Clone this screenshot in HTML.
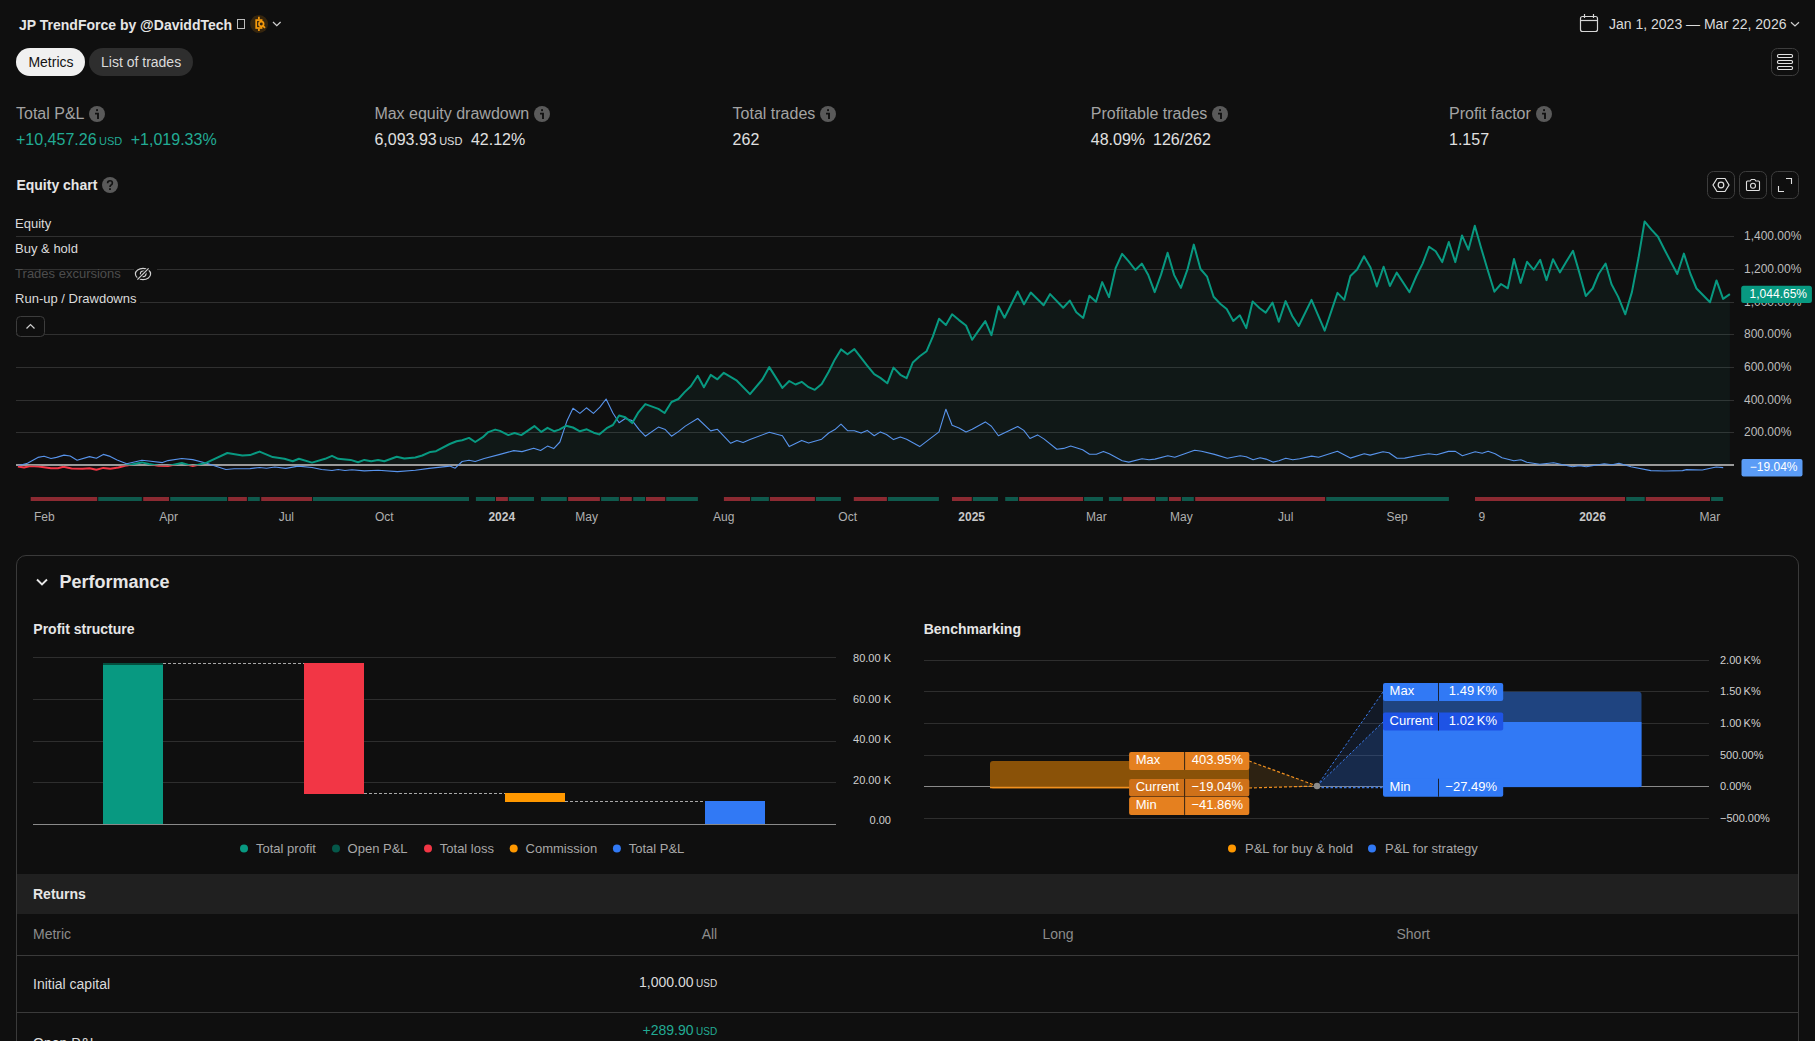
<!DOCTYPE html><html><head><meta charset="utf-8"><style>
html,body{margin:0;padding:0;background:#0f0f0f;width:1815px;height:1041px;overflow:hidden;}
body{position:relative;font-family:"Liberation Sans", sans-serif;}
.t{position:absolute;line-height:1;white-space:nowrap;}
.abs{position:absolute;}
svg{position:absolute;left:0;top:0;}
</style></head><body>
<div class="t" style="left:19px;top:17.55px;font-size:14px;color:#e6e6e6;font-weight:700;">JP TrendForce by @DaviddTech</div>
<div class="abs" style="left:237px;top:19px;width:8px;height:10px;border:1px solid #bbb;box-sizing:border-box;"></div>
<svg width="1815" height="1041" style="pointer-events:none">
<circle cx="259.1" cy="24" r="9" fill="#35250e"/>
<g stroke="#f59a0c" stroke-width="1.7" fill="none">
<rect x="256.2" y="20.1" width="5.4" height="7.9" />
<line x1="258.9" y1="16.8" x2="258.9" y2="19.5"/><line x1="258.9" y1="28.5" x2="258.9" y2="30.9"/>
<circle cx="261.3" cy="24" r="2.3" fill="#35250e"/><line x1="263" y1="25.8" x2="265" y2="27.8"/>
</g>
<path d="M273 22 L276.8 25.6 L280.6 22" stroke="#cfcfcf" stroke-width="1.3" fill="none"/>
</svg>
<div class="abs" style="left:16px;top:48px;width:69px;height:28px;border-radius:14px;background:#f0f0f0;"></div>
<div class="t" style="left:28.4px;top:54.65px;font-size:14px;color:#131313;font-weight:400;">Metrics</div>
<div class="abs" style="left:89px;top:48px;width:104px;height:28px;border-radius:14px;background:#2e2e2e;"></div>
<div class="t" style="left:101px;top:54.65px;font-size:14px;color:#dbdbdb;font-weight:400;">List of trades</div>
<div class="t" style="left:1609px;top:17.45px;font-size:14px;color:#dbdbdb;font-weight:400;">Jan 1, 2023 — Mar 22, 2026</div>
<svg width="1815" height="1041">
<g stroke="#d6d6d6" stroke-width="1.2" fill="none">
<rect x="1580.5" y="16.5" width="17" height="15" rx="2"/>
<line x1="1580.5" y1="20.5" x2="1597.5" y2="20.5"/>
<line x1="1584.5" y1="14" x2="1584.5" y2="18"/><line x1="1593.5" y1="14" x2="1593.5" y2="18"/>
</g>
<path d="M1791 22.2 L1795 26 L1799 22.2" stroke="#cfcfcf" stroke-width="1.2" fill="none"/>
<rect x="1771.5" y="48.5" width="27" height="27" rx="6" stroke="#3d3d3d" fill="none"/>
<g stroke="#e0e0e0" stroke-width="1.2" fill="none">
<rect x="1777.5" y="54.5" width="15" height="3" rx="1.2"/>
<rect x="1777.5" y="60.5" width="15" height="3" rx="1.2"/>
<rect x="1777.5" y="66.5" width="15" height="3" rx="1.2"/>
</g>
</svg>
<div id="metrics">
<div class="t" style="left:16px;top:105.66px;font-size:16px;color:#a3a3a3;font-weight:400;">Total P&amp;L</div>
<div class="t" style="left:374.4px;top:105.66px;font-size:16px;color:#a3a3a3;font-weight:400;">Max equity drawdown</div>
<div class="t" style="left:732.6px;top:105.66px;font-size:16px;color:#a3a3a3;font-weight:400;">Total trades</div>
<div class="t" style="left:1090.8px;top:105.66px;font-size:16px;color:#a3a3a3;font-weight:400;">Profitable trades</div>
<div class="t" style="left:1449px;top:105.66px;font-size:16px;color:#a3a3a3;font-weight:400;">Profit factor</div>
</div>
<div class="t" style="left:16px;top:132.46px;font-size:16px;color:#22ab94">+10,457.26<span style="font-size:11px;margin-left:2.5px">USD</span><span style="margin-left:8.5px">+1,019.33%</span></div>
<div class="t" style="left:374.4px;top:132.46px;font-size:16px;color:#e0e0e0">6,093.93<span style="font-size:11px;margin-left:2.5px">USD</span><span style="margin-left:8.5px">42.12%</span></div>
<div class="t" style="left:732.6px;top:132.46px;font-size:16px;color:#e0e0e0;font-weight:400;">262</div>
<div class="t" style="left:1090.8px;top:132.46px;font-size:16px;color:#e0e0e0">48.09%<span style="margin-left:8px">126/262</span></div>
<div class="t" style="left:1449px;top:132.46px;font-size:16px;color:#e0e0e0;font-weight:400;">1.157</div>
<div class="t" style="left:16.4px;top:177.75px;font-size:14px;color:#e6e6e6;font-weight:700;">Equity chart</div>
<svg width="1815" height="1041">
<defs><clipPath id="above"><rect x="0" y="0" width="1815" height="465.4"/></clipPath><clipPath id="below"><rect x="0" y="465.4" width="1815" height="200"/></clipPath></defs>
<line x1="16" y1="432.5" x2="1734" y2="432.5" stroke="#303030" stroke-width="1"/>
<line x1="16" y1="400.5" x2="1734" y2="400.5" stroke="#303030" stroke-width="1"/>
<line x1="16" y1="367.5" x2="1734" y2="367.5" stroke="#303030" stroke-width="1"/>
<line x1="16" y1="334.5" x2="1734" y2="334.5" stroke="#303030" stroke-width="1"/>
<line x1="16" y1="302.5" x2="1734" y2="302.5" stroke="#303030" stroke-width="1"/>
<line x1="16" y1="269.5" x2="1734" y2="269.5" stroke="#303030" stroke-width="1"/>
<line x1="16" y1="236.5" x2="1734" y2="236.5" stroke="#303030" stroke-width="1"/>
<polygon points="17.9,465.0 17.9,466.5 24.1,467.5 30.3,466.1 38.6,466.5 51.0,468.2 57.9,468.2 63.4,466.8 71.6,468.4 82.6,468.8 89.5,468.2 96.4,469.8 103.3,467.9 110.2,468.8 118.5,467.5 126.7,465.4 141.9,462.4 148.8,464.0 158.4,465.7 168.0,466.1 181.8,463.0 192.8,466.1 206.6,462.6 227.3,453.0 242.4,455.5 250.0,455.1 259.6,451.6 272.7,457.1 284.4,458.8 292.7,461.3 298.9,458.8 312.0,462.6 325.1,458.8 332.0,455.8 338.2,458.8 350.6,459.9 358.1,462.2 364.3,459.9 371.2,461.3 378.1,459.9 384.3,461.3 396.7,456.7 404.3,458.5 415.3,457.5 422.2,455.5 430.4,451.9 436.0,451.2 449.7,444.0 456.6,441.3 462.1,440.2 469.0,437.9 475.2,442.0 482.8,437.2 488.3,432.1 495.2,429.6 500.0,430.9 508.3,435.1 514.5,433.0 521.3,435.1 534.4,426.1 541.3,431.9 547.5,427.8 554.4,431.3 559.2,429.6 566.1,425.8 573.0,427.5 579.9,431.3 586.8,429.3 593.7,432.7 599.2,434.4 606.7,428.2 612.9,425.0 619.1,415.5 625.3,417.2 632.2,423.1 638.4,412.3 645.3,404.1 658.4,408.9 664.6,413.0 671.5,402.0 678.4,399.0 684.6,392.1 690.8,386.2 697.7,375.8 703.9,387.3 710.7,374.9 717.4,379.3 723.8,372.8 736.9,380.7 750.0,394.1 762.3,379.5 769.3,367.1 782.4,387.9 789.3,381.0 795.5,384.5 801.7,381.8 808.6,387.2 814.8,389.8 821.7,384.1 828.7,371.7 834.9,359.4 841.0,349.4 847.5,354.3 854.4,349.1 867.2,365.6 874.2,374.1 880.4,377.9 887.3,383.3 893.5,367.6 900.4,374.8 906.6,378.2 912.8,362.5 919.7,356.3 926.6,351.2 932.8,336.6 939.0,318.8 945.9,325.0 952.1,314.3 959.0,320.1 966.0,325.5 972.2,339.8 978.3,330.9 985.3,321.1 991.4,335.2 998.4,306.2 1004.5,317.7 1017.7,291.5 1024.0,304.3 1030.8,292.5 1043.6,305.2 1050.1,294.1 1063.2,307.8 1069.8,300.6 1076.3,312.2 1083.2,317.9 1089.4,295.7 1096.0,301.8 1102.2,282.1 1109.0,297.2 1115.6,268.2 1122.1,253.8 1128.7,261.3 1135.4,270.0 1141.8,263.6 1148.0,274.4 1154.7,292.1 1161.1,274.4 1167.6,252.8 1174.2,275.1 1180.9,287.9 1187.4,269.7 1193.8,244.6 1200.5,269.0 1207.1,276.7 1213.6,296.7 1220.5,304.0 1226.7,309.1 1233.3,321.0 1239.8,315.3 1246.3,328.1 1252.6,301.4 1259.4,308.0 1265.7,312.6 1272.5,302.6 1278.8,321.7 1285.6,301.1 1292.3,316.0 1298.7,326.0 1311.5,299.9 1324.7,330.7 1337.5,292.9 1344.2,299.9 1350.4,276.0 1357.1,269.5 1364.0,256.2 1370.5,267.5 1376.8,286.5 1383.6,266.7 1389.9,286.0 1396.7,272.6 1409.5,292.2 1416.4,276.0 1422.6,263.6 1429.1,246.7 1435.7,251.3 1442.2,262.1 1448.8,242.0 1455.3,262.1 1462.0,235.4 1468.4,249.7 1474.8,225.8 1481.2,248.2 1487.4,269.0 1494.4,291.7 1501.0,284.0 1507.8,288.3 1514.0,259.0 1520.6,282.9 1527.1,261.8 1533.7,269.8 1540.2,259.8 1546.5,280.1 1553.0,259.3 1559.9,272.4 1566.1,262.1 1573.0,250.8 1579.2,272.1 1585.8,296.0 1592.6,288.5 1598.6,274.0 1605.6,263.5 1611.5,284.3 1618.2,296.9 1625.3,314.3 1631.9,292.1 1638.5,257.8 1644.6,221.4 1651.4,229.6 1658.0,236.8 1664.7,250.0 1677.3,274.0 1683.9,253.6 1690.5,274.0 1696.5,288.5 1710.0,302.3 1716.5,280.4 1723.1,298.9 1729.9,294.1 1729.9,465.0" fill="rgba(34,171,148,0.06)" clip-path="url(#above)"/>
<line x1="16" y1="465.0" x2="1734" y2="465.0" stroke="#9a9a9a" stroke-width="2"/>
<polyline points="17.9,465.7 27.5,463.3 37.9,457.4 44.1,456.2 51.0,458.5 56.5,457.4 64.0,455.1 70.2,456.0 77.1,460.2 89.5,456.6 96.4,458.2 103.3,454.4 110.2,456.4 117.1,459.9 126.7,463.7 141.9,460.3 148.8,461.0 162.5,462.6 168.0,460.6 181.8,458.5 192.8,459.6 206.6,463.3 225.9,469.5 234.2,468.8 250.0,468.6 259.6,467.5 266.5,468.2 274.8,467.0 285.8,468.4 298.2,466.1 312.0,467.5 321.6,469.5 332.0,470.5 338.2,469.5 345.0,470.5 351.9,469.8 364.3,470.9 378.1,470.2 397.4,471.6 415.3,470.2 429.1,468.4 449.7,466.1 455.2,468.2 462.1,461.5 469.0,460.3 475.2,461.5 484.2,458.5 500.0,454.4 513.8,450.6 522.0,451.6 533.7,448.2 540.6,450.5 547.5,446.1 553.7,448.6 559.9,442.0 566.8,421.3 573.0,408.2 579.9,413.4 586.4,407.8 593.4,413.4 599.9,407.2 606.1,399.0 612.9,413.0 619.1,422.7 625.3,418.5 632.2,420.6 639.1,429.6 645.3,436.2 658.4,427.1 665.3,429.6 671.5,436.2 678.4,431.6 685.3,426.1 697.7,418.5 710.7,430.9 717.4,429.3 730.7,443.3 736.9,440.6 743.1,442.6 750.0,439.6 769.3,432.2 782.4,435.8 789.3,446.6 801.7,440.4 808.6,443.0 821.7,439.2 828.7,433.0 834.9,429.6 841.0,424.2 847.5,430.7 854.4,430.7 861.1,433.1 867.2,430.4 874.2,435.8 880.4,431.9 886.5,434.5 893.5,439.6 900.4,437.0 906.6,439.2 919.7,446.6 939.0,431.9 945.9,409.2 952.1,425.3 959.0,428.0 966.0,431.9 972.2,429.3 985.3,421.9 991.4,426.2 998.4,435.8 1017.7,426.5 1023.8,430.4 1030.0,438.5 1037.5,434.9 1043.9,438.9 1056.8,449.2 1063.7,448.4 1070.7,446.0 1082.6,449.8 1089.5,454.2 1096.4,454.2 1103.4,451.4 1109.3,453.8 1122.2,460.7 1128.8,462.1 1142.1,458.7 1149.0,459.7 1155.0,459.1 1167.8,455.7 1174.8,457.3 1194.6,450.2 1201.6,451.2 1214.5,454.4 1227.3,458.3 1240.2,455.7 1246.2,456.7 1253.1,459.7 1260.1,457.7 1266.0,459.1 1273.0,462.1 1278.9,460.7 1285.8,458.3 1292.8,459.7 1299.7,458.7 1311.6,456.1 1318.6,457.3 1337.4,451.2 1350.3,458.1 1364.2,453.8 1370.1,455.1 1383.0,451.8 1389.0,452.8 1396.9,458.3 1404.8,458.1 1416.7,455.7 1428.6,453.8 1436.6,454.8 1448.5,451.4 1455.4,451.4 1462.4,455.7 1475.2,451.8 1482.2,453.2 1488.1,451.2 1495.1,453.8 1502.0,457.7 1513.9,460.7 1520.9,459.7 1526.8,462.3 1539.7,464.3 1553.6,462.7 1572.4,466.7 1579.4,465.7 1586.3,466.7 1604.2,463.7 1612.1,464.7 1619.0,463.3 1630.9,466.7 1650.8,470.6 1664.6,471.0 1682.5,470.6 1686.5,469.6 1702.3,470.0 1716.2,467.0 1723.2,467.6" fill="none" stroke="#5894ec" stroke-width="1.1" stroke-linejoin="round"/>
<polyline points="17.9,466.5 24.1,467.5 30.3,466.1 38.6,466.5 51.0,468.2 57.9,468.2 63.4,466.8 71.6,468.4 82.6,468.8 89.5,468.2 96.4,469.8 103.3,467.9 110.2,468.8 118.5,467.5 126.7,465.4 141.9,462.4 148.8,464.0 158.4,465.7 168.0,466.1 181.8,463.0 192.8,466.1 206.6,462.6 227.3,453.0 242.4,455.5 250.0,455.1 259.6,451.6 272.7,457.1 284.4,458.8 292.7,461.3 298.9,458.8 312.0,462.6 325.1,458.8 332.0,455.8 338.2,458.8 350.6,459.9 358.1,462.2 364.3,459.9 371.2,461.3 378.1,459.9 384.3,461.3 396.7,456.7 404.3,458.5 415.3,457.5 422.2,455.5 430.4,451.9 436.0,451.2 449.7,444.0 456.6,441.3 462.1,440.2 469.0,437.9 475.2,442.0 482.8,437.2 488.3,432.1 495.2,429.6 500.0,430.9 508.3,435.1 514.5,433.0 521.3,435.1 534.4,426.1 541.3,431.9 547.5,427.8 554.4,431.3 559.2,429.6 566.1,425.8 573.0,427.5 579.9,431.3 586.8,429.3 593.7,432.7 599.2,434.4 606.7,428.2 612.9,425.0 619.1,415.5 625.3,417.2 632.2,423.1 638.4,412.3 645.3,404.1 658.4,408.9 664.6,413.0 671.5,402.0 678.4,399.0 684.6,392.1 690.8,386.2 697.7,375.8 703.9,387.3 710.7,374.9 717.4,379.3 723.8,372.8 736.9,380.7 750.0,394.1 762.3,379.5 769.3,367.1 782.4,387.9 789.3,381.0 795.5,384.5 801.7,381.8 808.6,387.2 814.8,389.8 821.7,384.1 828.7,371.7 834.9,359.4 841.0,349.4 847.5,354.3 854.4,349.1 867.2,365.6 874.2,374.1 880.4,377.9 887.3,383.3 893.5,367.6 900.4,374.8 906.6,378.2 912.8,362.5 919.7,356.3 926.6,351.2 932.8,336.6 939.0,318.8 945.9,325.0 952.1,314.3 959.0,320.1 966.0,325.5 972.2,339.8 978.3,330.9 985.3,321.1 991.4,335.2 998.4,306.2 1004.5,317.7 1017.7,291.5 1024.0,304.3 1030.8,292.5 1043.6,305.2 1050.1,294.1 1063.2,307.8 1069.8,300.6 1076.3,312.2 1083.2,317.9 1089.4,295.7 1096.0,301.8 1102.2,282.1 1109.0,297.2 1115.6,268.2 1122.1,253.8 1128.7,261.3 1135.4,270.0 1141.8,263.6 1148.0,274.4 1154.7,292.1 1161.1,274.4 1167.6,252.8 1174.2,275.1 1180.9,287.9 1187.4,269.7 1193.8,244.6 1200.5,269.0 1207.1,276.7 1213.6,296.7 1220.5,304.0 1226.7,309.1 1233.3,321.0 1239.8,315.3 1246.3,328.1 1252.6,301.4 1259.4,308.0 1265.7,312.6 1272.5,302.6 1278.8,321.7 1285.6,301.1 1292.3,316.0 1298.7,326.0 1311.5,299.9 1324.7,330.7 1337.5,292.9 1344.2,299.9 1350.4,276.0 1357.1,269.5 1364.0,256.2 1370.5,267.5 1376.8,286.5 1383.6,266.7 1389.9,286.0 1396.7,272.6 1409.5,292.2 1416.4,276.0 1422.6,263.6 1429.1,246.7 1435.7,251.3 1442.2,262.1 1448.8,242.0 1455.3,262.1 1462.0,235.4 1468.4,249.7 1474.8,225.8 1481.2,248.2 1487.4,269.0 1494.4,291.7 1501.0,284.0 1507.8,288.3 1514.0,259.0 1520.6,282.9 1527.1,261.8 1533.7,269.8 1540.2,259.8 1546.5,280.1 1553.0,259.3 1559.9,272.4 1566.1,262.1 1573.0,250.8 1579.2,272.1 1585.8,296.0 1592.6,288.5 1598.6,274.0 1605.6,263.5 1611.5,284.3 1618.2,296.9 1625.3,314.3 1631.9,292.1 1638.5,257.8 1644.6,221.4 1651.4,229.6 1658.0,236.8 1664.7,250.0 1677.3,274.0 1683.9,253.6 1690.5,274.0 1696.5,288.5 1710.0,302.3 1716.5,280.4 1723.1,298.9 1729.9,294.1" fill="none" stroke="#089981" stroke-width="2" stroke-linejoin="round" clip-path="url(#above)"/>
<polyline points="17.9,466.5 24.1,467.5 30.3,466.1 38.6,466.5 51.0,468.2 57.9,468.2 63.4,466.8 71.6,468.4 82.6,468.8 89.5,468.2 96.4,469.8 103.3,467.9 110.2,468.8 118.5,467.5 126.7,465.4 141.9,462.4 148.8,464.0 158.4,465.7 168.0,466.1 181.8,463.0 192.8,466.1 206.6,462.6 227.3,453.0 242.4,455.5 250.0,455.1 259.6,451.6 272.7,457.1 284.4,458.8 292.7,461.3 298.9,458.8 312.0,462.6 325.1,458.8 332.0,455.8 338.2,458.8 350.6,459.9 358.1,462.2 364.3,459.9 371.2,461.3 378.1,459.9 384.3,461.3 396.7,456.7 404.3,458.5 415.3,457.5 422.2,455.5 430.4,451.9 436.0,451.2 449.7,444.0 456.6,441.3 462.1,440.2 469.0,437.9 475.2,442.0 482.8,437.2 488.3,432.1 495.2,429.6 500.0,430.9 508.3,435.1 514.5,433.0 521.3,435.1 534.4,426.1 541.3,431.9 547.5,427.8 554.4,431.3 559.2,429.6 566.1,425.8 573.0,427.5 579.9,431.3 586.8,429.3 593.7,432.7 599.2,434.4 606.7,428.2 612.9,425.0 619.1,415.5 625.3,417.2 632.2,423.1 638.4,412.3 645.3,404.1 658.4,408.9 664.6,413.0 671.5,402.0 678.4,399.0 684.6,392.1 690.8,386.2 697.7,375.8 703.9,387.3 710.7,374.9 717.4,379.3 723.8,372.8 736.9,380.7 750.0,394.1 762.3,379.5 769.3,367.1 782.4,387.9 789.3,381.0 795.5,384.5 801.7,381.8 808.6,387.2 814.8,389.8 821.7,384.1 828.7,371.7 834.9,359.4 841.0,349.4 847.5,354.3 854.4,349.1 867.2,365.6 874.2,374.1 880.4,377.9 887.3,383.3 893.5,367.6 900.4,374.8 906.6,378.2 912.8,362.5 919.7,356.3 926.6,351.2 932.8,336.6 939.0,318.8 945.9,325.0 952.1,314.3 959.0,320.1 966.0,325.5 972.2,339.8 978.3,330.9 985.3,321.1 991.4,335.2 998.4,306.2 1004.5,317.7 1017.7,291.5 1024.0,304.3 1030.8,292.5 1043.6,305.2 1050.1,294.1 1063.2,307.8 1069.8,300.6 1076.3,312.2 1083.2,317.9 1089.4,295.7 1096.0,301.8 1102.2,282.1 1109.0,297.2 1115.6,268.2 1122.1,253.8 1128.7,261.3 1135.4,270.0 1141.8,263.6 1148.0,274.4 1154.7,292.1 1161.1,274.4 1167.6,252.8 1174.2,275.1 1180.9,287.9 1187.4,269.7 1193.8,244.6 1200.5,269.0 1207.1,276.7 1213.6,296.7 1220.5,304.0 1226.7,309.1 1233.3,321.0 1239.8,315.3 1246.3,328.1 1252.6,301.4 1259.4,308.0 1265.7,312.6 1272.5,302.6 1278.8,321.7 1285.6,301.1 1292.3,316.0 1298.7,326.0 1311.5,299.9 1324.7,330.7 1337.5,292.9 1344.2,299.9 1350.4,276.0 1357.1,269.5 1364.0,256.2 1370.5,267.5 1376.8,286.5 1383.6,266.7 1389.9,286.0 1396.7,272.6 1409.5,292.2 1416.4,276.0 1422.6,263.6 1429.1,246.7 1435.7,251.3 1442.2,262.1 1448.8,242.0 1455.3,262.1 1462.0,235.4 1468.4,249.7 1474.8,225.8 1481.2,248.2 1487.4,269.0 1494.4,291.7 1501.0,284.0 1507.8,288.3 1514.0,259.0 1520.6,282.9 1527.1,261.8 1533.7,269.8 1540.2,259.8 1546.5,280.1 1553.0,259.3 1559.9,272.4 1566.1,262.1 1573.0,250.8 1579.2,272.1 1585.8,296.0 1592.6,288.5 1598.6,274.0 1605.6,263.5 1611.5,284.3 1618.2,296.9 1625.3,314.3 1631.9,292.1 1638.5,257.8 1644.6,221.4 1651.4,229.6 1658.0,236.8 1664.7,250.0 1677.3,274.0 1683.9,253.6 1690.5,274.0 1696.5,288.5 1710.0,302.3 1716.5,280.4 1723.1,298.9 1729.9,294.1" fill="none" stroke="#f23645" stroke-width="2" stroke-linejoin="round" clip-path="url(#below)"/>
<text x="1744" y="435.5" font-size="12" fill="#bdbdbd" font-family='"Liberation Sans", sans-serif'>200.00%</text>
<text x="1744" y="403.5" font-size="12" fill="#bdbdbd" font-family='"Liberation Sans", sans-serif'>400.00%</text>
<text x="1744" y="370.5" font-size="12" fill="#bdbdbd" font-family='"Liberation Sans", sans-serif'>600.00%</text>
<text x="1744" y="337.5" font-size="12" fill="#bdbdbd" font-family='"Liberation Sans", sans-serif'>800.00%</text>
<text x="1744" y="305.5" font-size="12" fill="#bdbdbd" font-family='"Liberation Sans", sans-serif'>1,000.00%</text>
<text x="1744" y="272.5" font-size="12" fill="#bdbdbd" font-family='"Liberation Sans", sans-serif'>1,200.00%</text>
<text x="1744" y="239.5" font-size="12" fill="#bdbdbd" font-family='"Liberation Sans", sans-serif'>1,400.00%</text>
<rect x="1741.2" y="285.7" width="70.7" height="17.2" rx="2.5" fill="#089981"/>
<text x="1807" y="298" font-size="12" fill="#ffffff" text-anchor="end" font-family='"Liberation Sans", sans-serif'>1,044.65%</text>
<rect x="1741.5" y="459" width="61" height="17.5" rx="2" fill="#5b9cf6"/>
<text x="1797.5" y="471" font-size="12" fill="#ffffff" text-anchor="end" font-family='"Liberation Sans", sans-serif'>−19.04%</text>
<rect x="30.7" y="497" width="66.5" height="4" fill="#8c2a32"/>
<rect x="98.2" y="497" width="43.6" height="4" fill="#0f5a4d"/>
<rect x="143.2" y="497" width="25.8" height="4" fill="#8c2a32"/>
<rect x="170.2" y="497" width="56.9" height="4" fill="#0f5a4d"/>
<rect x="228.1" y="497" width="18.8" height="4" fill="#8c2a32"/>
<rect x="247.9" y="497" width="11.9" height="4" fill="#0f5a4d"/>
<rect x="261.2" y="497" width="50.8" height="4" fill="#8c2a32"/>
<rect x="312.9" y="497" width="156.1" height="4" fill="#0f5a4d"/>
<rect x="475.9" y="497" width="19.1" height="4" fill="#0f5a4d"/>
<rect x="496.0" y="497" width="11.9" height="4" fill="#8c2a32"/>
<rect x="508.8" y="497" width="25.2" height="4" fill="#0f5a4d"/>
<rect x="541.0" y="497" width="25.8" height="4" fill="#0f5a4d"/>
<rect x="568.1" y="497" width="31.8" height="4" fill="#8c2a32"/>
<rect x="601.1" y="497" width="17.8" height="4" fill="#0f5a4d"/>
<rect x="619.9" y="497" width="11.9" height="4" fill="#8c2a32"/>
<rect x="633.2" y="497" width="11.9" height="4" fill="#0f5a4d"/>
<rect x="646.0" y="497" width="19.2" height="4" fill="#8c2a32"/>
<rect x="666.2" y="497" width="31.7" height="4" fill="#0f5a4d"/>
<rect x="723.9" y="497" width="26.2" height="4" fill="#8c2a32"/>
<rect x="751.1" y="497" width="17.8" height="4" fill="#0f5a4d"/>
<rect x="769.9" y="497" width="45.0" height="4" fill="#8c2a32"/>
<rect x="815.9" y="497" width="25.0" height="4" fill="#0f5a4d"/>
<rect x="853.8" y="497" width="33.1" height="4" fill="#8c2a32"/>
<rect x="887.9" y="497" width="51.0" height="4" fill="#0f5a4d"/>
<rect x="952.0" y="497" width="19.8" height="4" fill="#8c2a32"/>
<rect x="972.8" y="497" width="25.2" height="4" fill="#0f5a4d"/>
<rect x="1005.2" y="497" width="12.9" height="4" fill="#0f5a4d"/>
<rect x="1019.1" y="497" width="64.0" height="4" fill="#8c2a32"/>
<rect x="1084.1" y="497" width="18.9" height="4" fill="#0f5a4d"/>
<rect x="1108.9" y="497" width="12.9" height="4" fill="#0f5a4d"/>
<rect x="1123.2" y="497" width="31.7" height="4" fill="#8c2a32"/>
<rect x="1155.9" y="497" width="11.9" height="4" fill="#0f5a4d"/>
<rect x="1169.0" y="497" width="11.9" height="4" fill="#8c2a32"/>
<rect x="1181.9" y="497" width="11.9" height="4" fill="#0f5a4d"/>
<rect x="1195.2" y="497" width="129.9" height="4" fill="#8c2a32"/>
<rect x="1326.2" y="497" width="122.7" height="4" fill="#0f5a4d"/>
<rect x="1475.0" y="497" width="150.0" height="4" fill="#8c2a32"/>
<rect x="1626.2" y="497" width="18.5" height="4" fill="#0f5a4d"/>
<rect x="1645.8" y="497" width="64.2" height="4" fill="#8c2a32"/>
<rect x="1711.1" y="497" width="12.0" height="4" fill="#0f5a4d"/>
<text x="34" y="521" font-size="12" fill="#b0b0b0" font-weight="400" font-family='"Liberation Sans", sans-serif'>Feb</text>
<text x="159.3" y="521" font-size="12" fill="#b0b0b0" font-weight="400" font-family='"Liberation Sans", sans-serif'>Apr</text>
<text x="278.7" y="521" font-size="12" fill="#b0b0b0" font-weight="400" font-family='"Liberation Sans", sans-serif'>Jul</text>
<text x="375" y="521" font-size="12" fill="#b0b0b0" font-weight="400" font-family='"Liberation Sans", sans-serif'>Oct</text>
<text x="488.4" y="521" font-size="12" fill="#c8c8c8" font-weight="700" font-family='"Liberation Sans", sans-serif'>2024</text>
<text x="575.3" y="521" font-size="12" fill="#b0b0b0" font-weight="400" font-family='"Liberation Sans", sans-serif'>May</text>
<text x="713" y="521" font-size="12" fill="#b0b0b0" font-weight="400" font-family='"Liberation Sans", sans-serif'>Aug</text>
<text x="838.3" y="521" font-size="12" fill="#b0b0b0" font-weight="400" font-family='"Liberation Sans", sans-serif'>Oct</text>
<text x="958.3" y="521" font-size="12" fill="#c8c8c8" font-weight="700" font-family='"Liberation Sans", sans-serif'>2025</text>
<text x="1086.1" y="521" font-size="12" fill="#b0b0b0" font-weight="400" font-family='"Liberation Sans", sans-serif'>Mar</text>
<text x="1170" y="521" font-size="12" fill="#b0b0b0" font-weight="400" font-family='"Liberation Sans", sans-serif'>May</text>
<text x="1278.1" y="521" font-size="12" fill="#b0b0b0" font-weight="400" font-family='"Liberation Sans", sans-serif'>Jul</text>
<text x="1386.4" y="521" font-size="12" fill="#b0b0b0" font-weight="400" font-family='"Liberation Sans", sans-serif'>Sep</text>
<text x="1478.5" y="521" font-size="12" fill="#b0b0b0" font-weight="400" font-family='"Liberation Sans", sans-serif'>9</text>
<text x="1579.2" y="521" font-size="12" fill="#c8c8c8" font-weight="700" font-family='"Liberation Sans", sans-serif'>2026</text>
<text x="1699.5" y="521" font-size="12" fill="#b0b0b0" font-weight="400" font-family='"Liberation Sans", sans-serif'>Mar</text>
</svg>
<div class="abs" style="left:134px;top:262px;width:23px;height:22px;background:#0f0f0f"></div>
<div class="abs" style="left:10px;top:290px;width:130px;height:21px;background:#0f0f0f"></div>
<div class="t" style="left:15.1px;top:217.10px;font-size:13px;color:#dbdbdb;font-weight:400;">Equity</div>
<div class="t" style="left:15.1px;top:241.80px;font-size:13px;color:#dbdbdb;font-weight:400;">Buy &amp; hold</div>
<div class="t" style="left:15.1px;top:267.30px;font-size:13px;color:#4d4d4d;font-weight:400;">Trades excursions</div>
<div class="t" style="left:15.1px;top:292.30px;font-size:13px;color:#dbdbdb;font-weight:400;">Run-up / Drawdowns</div>
<svg width="1815" height="1041">
<g fill="#0f0f0f" stroke="#3d3d3d">
<rect x="1707.5" y="171.5" width="27" height="27" rx="6"/>
<rect x="1739.5" y="171.5" width="27" height="27" rx="6"/>
<rect x="1771.5" y="171.5" width="27" height="27" rx="6"/>
<rect x="16.5" y="316.5" width="28" height="20" rx="4"/>
</g>
<g stroke="#e0e0e0" stroke-width="1.2" fill="none">
<polygon points="1717,178.5 1725,178.5 1729,185 1725,191.5 1717,191.5 1713,185"/>
<circle cx="1721" cy="185" r="2.8"/>
<path d="M1746.5 182 Q1746.5 181 1747.5 181 H1750.2 L1751.3 179.5 H1754.7 L1755.8 181 H1758.5 Q1759.5 181 1759.5 182 V189.5 Q1759.5 190.5 1758.5 190.5 H1747.5 Q1746.5 190.5 1746.5 189.5 Z" stroke-width="1.1"/>
<circle cx="1753" cy="185.7" r="2.5" stroke-width="1.1"/>
<path d="M1786 178.5 H1791.5 V184" stroke-width="1.1"/>
<path d="M1778.5 186 V191.5 H1784" stroke-width="1.1"/>
<path d="M26.5 328.5 L30.5 324.5 L34.5 328.5" stroke="#cfcfcf"/>
</g>
<g stroke="#d0d0d0" stroke-width="1.2" fill="none">
<ellipse cx="143" cy="274" rx="7.6" ry="5.6"/>
<circle cx="143.2" cy="273.8" r="2.8"/>
<line x1="137.4" y1="279.6" x2="148.6" y2="268.4" stroke="#0f0f0f" stroke-width="3"/>
<line x1="137.4" y1="279.6" x2="148.6" y2="268.4"/>
</g>
<circle cx="110" cy="185" r="8" fill="#5a5a5a"/>
<circle cx="97" cy="114" r="8" fill="#5a5a5a"/><rect x="96.1" y="109.2" width="1.9" height="1.9" fill="#111"/><path d="M95 113.6 H98 V119" stroke="#111" stroke-width="1.9" fill="none"/>
<circle cx="542" cy="114" r="8" fill="#5a5a5a"/><rect x="541.1" y="109.2" width="1.9" height="1.9" fill="#111"/><path d="M540 113.6 H543 V119" stroke="#111" stroke-width="1.9" fill="none"/>
<circle cx="828" cy="114" r="8" fill="#5a5a5a"/><rect x="827.1" y="109.2" width="1.9" height="1.9" fill="#111"/><path d="M826 113.6 H829 V119" stroke="#111" stroke-width="1.9" fill="none"/>
<circle cx="1220" cy="114" r="8" fill="#5a5a5a"/><rect x="1219.1" y="109.2" width="1.9" height="1.9" fill="#111"/><path d="M1218 113.6 H1221 V119" stroke="#111" stroke-width="1.9" fill="none"/>
<circle cx="1544" cy="114" r="8" fill="#5a5a5a"/><rect x="1543.1" y="109.2" width="1.9" height="1.9" fill="#111"/><path d="M1542 113.6 H1545 V119" stroke="#111" stroke-width="1.9" fill="none"/>
<path d="M107.6 183.2 Q107.6 180.8 110 180.8 Q112.4 180.8 112.4 183 Q112.4 184.4 110.8 185.2 Q110 185.7 110 187" stroke="#111" stroke-width="1.6" fill="none"/>
<rect x="109.1" y="188.2" width="1.8" height="1.8" fill="#111"/>

</svg>
<div class="abs" style="left:16px;top:555px;width:1783px;height:600px;border:1px solid #3a3a3a;border-radius:10px;box-sizing:border-box;"></div>
<svg width="1815" height="1041"><path d="M37 579.5 L42 584.5 L47 579.5" stroke="#e6e6e6" stroke-width="1.9" fill="none"/></svg>
<div class="t" style="left:59.5px;top:572.76px;font-size:18px;color:#e6e6e6;font-weight:700;">Performance</div>
<div class="t" style="left:33.3px;top:621.75px;font-size:14px;color:#e6e6e6;font-weight:700;">Profit structure</div>
<div class="t" style="left:923.7px;top:621.75px;font-size:14px;color:#e6e6e6;font-weight:700;">Benchmarking</div>
<svg width="1815" height="1041">
<line x1="33" y1="657.5" x2="836" y2="657.5" stroke="#2e2e2e"/>
<line x1="33" y1="699.5" x2="836" y2="699.5" stroke="#2e2e2e"/>
<line x1="33" y1="741.5" x2="836" y2="741.5" stroke="#2e2e2e"/>
<line x1="33" y1="782.5" x2="836" y2="782.5" stroke="#2e2e2e"/>
<line x1="33" y1="824.5" x2="836" y2="824.5" stroke="#8a8a8a"/>
<text x="891" y="661.5" font-size="11" fill="#d0d0d0" text-anchor="end" font-family='"Liberation Sans", sans-serif'>80.00 K</text>
<text x="891" y="702.7" font-size="11" fill="#d0d0d0" text-anchor="end" font-family='"Liberation Sans", sans-serif'>60.00 K</text>
<text x="891" y="742.8" font-size="11" fill="#d0d0d0" text-anchor="end" font-family='"Liberation Sans", sans-serif'>40.00 K</text>
<text x="891" y="784.0" font-size="11" fill="#d0d0d0" text-anchor="end" font-family='"Liberation Sans", sans-serif'>20.00 K</text>
<text x="891" y="824.2" font-size="11" fill="#d0d0d0" text-anchor="end" font-family='"Liberation Sans", sans-serif'>0.00</text>
<rect x="103" y="663" width="60" height="161" fill="#089981"/>
<rect x="103" y="663" width="60" height="2" fill="#04503f"/>
<rect x="304" y="663" width="60" height="131" fill="#f23645"/>
<rect x="505" y="793" width="60" height="9" fill="#ff9800"/>
<rect x="705" y="801" width="60" height="23" fill="#3179f5"/>
<g stroke="#a8a8a8" stroke-dasharray="3 2"><line x1="163" y1="663.5" x2="304" y2="663.5"/><line x1="364" y1="793.5" x2="505" y2="793.5"/><line x1="565" y1="801.5" x2="705" y2="801.5"/></g>
<circle cx="244" cy="848.5" r="4" fill="#089981"/>
<text x="256" y="853" font-size="13" fill="#a8a8a8" font-family='"Liberation Sans", sans-serif'>Total profit</text>
<circle cx="336" cy="848.5" r="4" fill="#05584a"/>
<text x="347.6" y="853" font-size="13" fill="#a8a8a8" font-family='"Liberation Sans", sans-serif'>Open P&amp;L</text>
<circle cx="428" cy="848.5" r="4" fill="#f23645"/>
<text x="439.8" y="853" font-size="13" fill="#a8a8a8" font-family='"Liberation Sans", sans-serif'>Total loss</text>
<circle cx="513.7" cy="848.5" r="4" fill="#ff9800"/>
<text x="525.6" y="853" font-size="13" fill="#a8a8a8" font-family='"Liberation Sans", sans-serif'>Commission</text>
<circle cx="616.9" cy="848.5" r="4" fill="#3179f5"/>
<text x="628.7" y="853" font-size="13" fill="#a8a8a8" font-family='"Liberation Sans", sans-serif'>Total P&amp;L</text>
<line x1="924" y1="660.5" x2="1709" y2="660.5" stroke="#2e2e2e"/>
<line x1="924" y1="691.5" x2="1709" y2="691.5" stroke="#2e2e2e"/>
<line x1="924" y1="723.5" x2="1709" y2="723.5" stroke="#2e2e2e"/>
<line x1="924" y1="755.5" x2="1709" y2="755.5" stroke="#2e2e2e"/>
<line x1="924" y1="818.5" x2="1709" y2="818.5" stroke="#2e2e2e"/>
<line x1="924" y1="786.5" x2="1709" y2="786.5" stroke="#8a8a8a"/>
<text x="1720" y="664.0" font-size="11" fill="#d0d0d0" font-family='"Liberation Sans", sans-serif'>2.00 K%</text>
<text x="1720" y="695.2" font-size="11" fill="#d0d0d0" font-family='"Liberation Sans", sans-serif'>1.50 K%</text>
<text x="1720" y="727.0" font-size="11" fill="#d0d0d0" font-family='"Liberation Sans", sans-serif'>1.00 K%</text>
<text x="1720" y="758.8" font-size="11" fill="#d0d0d0" font-family='"Liberation Sans", sans-serif'>500.00%</text>
<text x="1720" y="790.2" font-size="11" fill="#d0d0d0" font-family='"Liberation Sans", sans-serif'>0.00%</text>
<text x="1720" y="821.8" font-size="11" fill="#d0d0d0" font-family='"Liberation Sans", sans-serif'>−500.00%</text>
<polygon points="1248.8,761 1317,786 1248.8,788" fill="#2d2212"/>
<rect x="990" y="761" width="259" height="27.5" rx="3" fill="#8a5208"/>
<line x1="990" y1="787.6" x2="1130" y2="787.6" stroke="#f09020" stroke-width="1.5"/>
<g stroke="#f09020" stroke-dasharray="3 2" stroke-width="1.2"><line x1="1249" y1="761" x2="1317" y2="786"/><line x1="1249" y1="788" x2="1317" y2="786"/></g>
<polygon points="1317,786 1383,692 1383,787" fill="rgba(49,121,245,0.1)"/>
<polygon points="1317,786 1383,722 1383,787" fill="rgba(49,121,245,0.18)"/>
<rect x="1383" y="691.8" width="258.5" height="95.5" rx="3" fill="#1f4480"/>
<rect x="1383" y="722" width="258.5" height="65" fill="#3179f5"/>
<g stroke="#3a7ae8" stroke-dasharray="2.5 2" stroke-width="1"><line x1="1317" y1="786" x2="1383" y2="692"/><line x1="1317" y1="786" x2="1383" y2="722"/><line x1="1317" y1="787.5" x2="1383" y2="787.5" stroke-width="1.5"/></g>
<circle cx="1317" cy="786" r="3.2" fill="#8a8a8a"/>
<rect x="1129.1" y="751.9" width="120.2" height="18" rx="2" fill="#e5801f"/>
<rect x="1184.1" y="751.9" width="1" height="18" fill="#141414" opacity="0.85"/>
<text x="1135.6999999999998" y="764.3" font-size="13" fill="#ffffff" font-family='"Liberation Sans", sans-serif'>Max</text>
<text x="1243.1" y="764.3" font-size="13" fill="#ffffff" text-anchor="end" font-family='"Liberation Sans", sans-serif'>403.95%</text>
<rect x="1129.1" y="778.9" width="120.2" height="17.6" rx="2" fill="#cf7119"/>
<rect x="1184.1" y="778.9" width="1" height="17.6" fill="#141414" opacity="0.85"/>
<text x="1135.6999999999998" y="791.1" font-size="13" fill="#ffffff" font-family='"Liberation Sans", sans-serif'>Current</text>
<text x="1243.1" y="791.1" font-size="13" fill="#ffffff" text-anchor="end" font-family='"Liberation Sans", sans-serif'>−19.04%</text>
<rect x="1129.1" y="796.9" width="120.2" height="18" rx="2" fill="#e5801f"/>
<rect x="1184.1" y="796.9" width="1" height="18" fill="#141414" opacity="0.85"/>
<text x="1135.6999999999998" y="809.3" font-size="13" fill="#ffffff" font-family='"Liberation Sans", sans-serif'>Min</text>
<text x="1243.1" y="809.3" font-size="13" fill="#ffffff" text-anchor="end" font-family='"Liberation Sans", sans-serif'>−41.86%</text>
<rect x="1383" y="682.9" width="120.2" height="18" rx="2" fill="#3179f5"/>
<rect x="1438" y="682.9" width="1" height="18" fill="#141414" opacity="0.85"/>
<text x="1389.6" y="695.3" font-size="13" fill="#ffffff" font-family='"Liberation Sans", sans-serif'>Max</text>
<text x="1497" y="695.3" font-size="13" fill="#ffffff" text-anchor="end" font-family='"Liberation Sans", sans-serif'>1.49 K%</text>
<rect x="1383" y="712.6" width="120.2" height="18" rx="2" fill="#1e53e5"/>
<rect x="1438" y="712.6" width="1" height="18" fill="#141414" opacity="0.85"/>
<text x="1389.6" y="725.0" font-size="13" fill="#ffffff" font-family='"Liberation Sans", sans-serif'>Current</text>
<text x="1497" y="725.0" font-size="13" fill="#ffffff" text-anchor="end" font-family='"Liberation Sans", sans-serif'>1.02 K%</text>
<rect x="1383" y="778.7" width="120.2" height="18" rx="2" fill="#3179f5"/>
<rect x="1438" y="778.7" width="1" height="18" fill="#141414" opacity="0.85"/>
<text x="1389.6" y="791.1" font-size="13" fill="#ffffff" font-family='"Liberation Sans", sans-serif'>Min</text>
<text x="1497" y="791.1" font-size="13" fill="#ffffff" text-anchor="end" font-family='"Liberation Sans", sans-serif'>−27.49%</text>
<circle cx="1232" cy="848.5" r="4" fill="#ff9800"/>
<text x="1245" y="853" font-size="13" fill="#a8a8a8" font-family='"Liberation Sans", sans-serif'>P&amp;L for buy &amp; hold</text>
<circle cx="1372" cy="848.5" r="4" fill="#3179f5"/>
<text x="1385" y="853" font-size="13" fill="#a8a8a8" font-family='"Liberation Sans", sans-serif'>P&amp;L for strategy</text>
</svg>
<div class="abs" style="left:17px;top:874px;width:1781px;height:40px;background:#202020;"></div>
<div class="t" style="left:33px;top:886.85px;font-size:14px;color:#e6e6e6;font-weight:700;">Returns</div>
<div class="t" style="left:33px;top:926.95px;font-size:14px;color:#8c8c8c;font-weight:400;">Metric</div>
<div class="t" style="right:1097.8px;top:926.95px;font-size:14px;color:#8c8c8c;font-weight:400;">All</div>
<div class="t" style="left:1042.5px;top:926.95px;font-size:14px;color:#8c8c8c;font-weight:400;">Long</div>
<div class="t" style="left:1396.5px;top:926.95px;font-size:14px;color:#8c8c8c;font-weight:400;">Short</div>
<div class="abs" style="left:17px;top:955px;width:1781px;height:1px;background:#3a3a3a;"></div>
<div class="t" style="left:33px;top:977.15px;font-size:14px;color:#dbdbdb;font-weight:400;">Initial capital</div>
<div class="t" style="right:1097.8px;top:975.45px;font-size:14px;color:#dbdbdb">1,000.00<span style="font-size:10px;margin-left:2.5px">USD</span></div>
<div class="abs" style="left:17px;top:1012px;width:1781px;height:1px;background:#3a3a3a;"></div>
<div class="t" style="left:33px;top:1035.65px;font-size:14px;color:#dbdbdb;font-weight:400;">Open P&amp;L</div>
<div class="t" style="right:1097.8px;top:1022.95px;font-size:14px;color:#22ab94">+289.90<span style="font-size:10px;margin-left:2.5px">USD</span></div>
</body></html>
